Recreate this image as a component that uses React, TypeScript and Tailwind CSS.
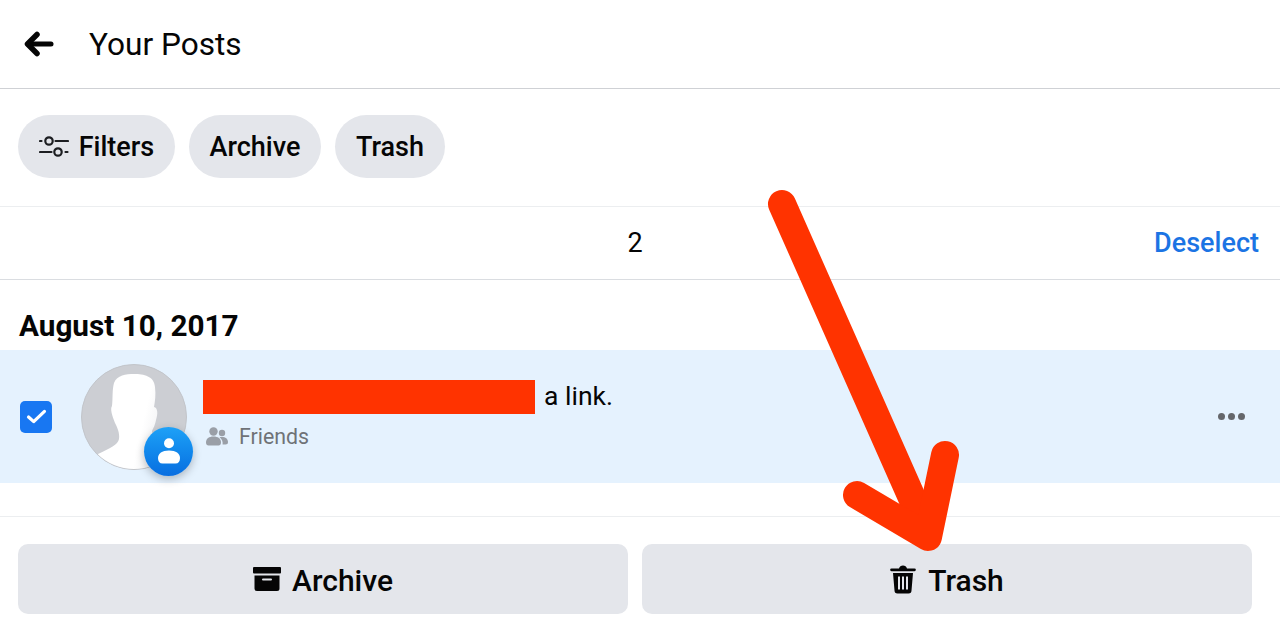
const roboto = "font-['Roboto',sans-serif]";

function BackArrow() {
  return (
    <svg className="w-[30px] h-[26px]" viewBox="0 0 30 26" fill="none" stroke="#050505" strokeLinecap="round" strokeLinejoin="round">
      <path d="M4 13H27" strokeWidth="5" />
      <path d="M13 3.5L3.5 13L13 22.5" strokeWidth="5.5" />
    </svg>
  );
}

function FilterIcon() {
  return (
    <svg className="w-[30px] h-[24px]" viewBox="0 0 30 24" fill="none" stroke="#1c1e21" strokeWidth="2.2" strokeLinecap="round">
      <circle cx="10" cy="6" r="3.7" />
      <path d="M1 6H2.5M16.5 6H29" />
      <circle cx="19" cy="17" r="3.7" />
      <path d="M1 17H12.5M26.5 17H28.5" />
    </svg>
  );
}

function ArchiveIcon() {
  return (
    <svg className="w-[28px] h-[24px]" viewBox="0 0 28 24" fill="#050505">
      <rect x="0" y="0" width="28" height="6.5" rx="1" />
      <path fillRule="evenodd" d="M1.5 8.5H26.5V21.5A2.5 2.5 0 0 1 24 24H4A2.5 2.5 0 0 1 1.5 21.5ZM10 11.5A1 1 0 0 0 10 13.5H18A1 1 0 0 0 18 11.5Z" />
    </svg>
  );
}

function TrashIcon() {
  return (
    <svg className="w-[26px] h-[29px]" viewBox="0 0 26 29" fill="#050505">
      <path d="M9 3.5C9.5 1.5 11 .5 13 .5S16.5 1.5 17 3.5H24.5A1.2 1.2 0 0 1 24.5 6.2H1.5A1.2 1.2 0 0 1 1.5 3.5Z" />
      <path fillRule="evenodd" d="M3 8H23L21.5 25.5A3 3 0 0 1 18.5 28.5H7.5A3 3 0 0 1 4.5 25.5ZM8 11.5V24.5H10V11.5ZM12 11.5V24.5H14V11.5ZM16 11.5V24.5H18V11.5Z" />
    </svg>
  );
}

function FriendsIcon() {
  return (
    <svg className="w-[22px] h-[19px]" viewBox="0 0 22 19" fill="#9a9fa7">
      <circle cx="7.5" cy="4.5" r="4.2" />
      <path d="M0 15.5C0 11.5 3 9.5 7.5 9.5S15 11.5 15 15.5C15 17.5 14 18.5 12.5 18.5H2.5C1 18.5 0 17.5 0 15.5Z" />
      <circle cx="16" cy="6" r="3.2" />
      <path d="M13.5 10.2C14.5 10 15.2 9.9 16 9.9C19.5 9.9 22 11.8 22 15C22 16.8 21 17.5 19.5 17.5H16.6C17 14.8 16 12 13.5 10.2Z" />
    </svg>
  );
}

function Avatar() {
  return (
    <div className="relative w-[106px] h-[106px] shrink-0">
      <div className="w-full h-full rounded-full overflow-hidden bg-[#ccced3] border border-[#c2c5ca]">
        <svg className="w-full h-full" viewBox="0 0 104 104">
          <defs>
            <linearGradient id="body" x1="0" y1="0" x2="1" y2="0.25">
              <stop offset="0.6" stopColor="#ffffff" />
              <stop offset="1" stopColor="#e6e7ea" />
            </linearGradient>
          </defs>
          <path
            d="M32 18C35 10 44 9 52 9C62 9 72 11 73 22C74 30 73 36 72 42C76 43 76 49 74 55C73 60 72 62 70 66C70 72 74 77 84 80L104 90V104H16L16 89C28 83 36 80 37 74C38 68 35 62 33 58C30 50 28 44 30 41C31 33 30 25 32 18Z"
            fill="url(#body)"
          />
        </svg>
      </div>
      {/* Profile badge */}
      <div className="absolute left-[63px] top-[63px] w-[49px] h-[49px] rounded-full bg-gradient-to-b from-[#1ea1f7] to-[#0a6ee0] shadow-[0_3px_8px_rgba(0,0,0,0.25)] flex items-center justify-center">
        <svg className="w-[22px] h-[26px]" viewBox="0 0 22 26" fill="#ffffff">
          <circle cx="11" cy="5.2" r="5" />
          <path d="M0 20C0 15.5 4 12.5 11 12.5S22 15.5 22 20C22 23.5 20.5 25.5 17.5 25.5H4.5C1.5 25.5 0 23.5 0 20Z" />
        </svg>
      </div>
    </div>
  );
}

export default function App() {
  return (
    <div className={`relative w-[1280px] h-[642px] overflow-hidden bg-white text-[#050505] ${roboto}`}>
      {/* Header */}
      <div className="h-[89px] flex items-center pl-[24px] border-b border-[#cfd1d5]">
        <BackArrow />
        <h1 className="ml-[35px] mt-[2px] text-[31.6px] font-normal leading-none">Your Posts</h1>
      </div>

      {/* Filter chips */}
      <div className="h-[118px] flex items-center gap-[14px] pl-[18px] pb-[2px] border-b border-[#eceef0]">
        <div className="h-[63px] w-[157px] rounded-full bg-[#e4e6eb] flex items-center justify-center gap-[10px] text-[27px] font-medium">
          <FilterIcon />
          <span className="mt-[1px]">Filters</span>
        </div>
        <div className="h-[63px] w-[132px] rounded-full bg-[#e4e6eb] flex items-center justify-center text-[27px] font-medium">
          <span className="mt-[1px]">Archive</span>
        </div>
        <div className="h-[63px] w-[110px] rounded-full bg-[#e4e6eb] flex items-center justify-center text-[27px] font-medium">
          <span className="mt-[1px]">Trash</span>
        </div>
      </div>

      {/* Selection bar */}
      <div className="relative h-[73px] flex items-center justify-center border-b border-[#dadde1] text-[27px]">
        <span className="-ml-[10px]">2</span>
        <span className="absolute right-[21px] font-medium text-[#1b74e4]">Deselect</span>
      </div>

      <div className="h-[70px] flex items-center pl-[19px] pt-[22px]">
        <h2 className="text-[29.7px] font-bold leading-none">August 10, 2017</h2>
      </div>

      {/* Selected post */}
      <div className="h-[133px] bg-[#e5f2fe] flex items-center pl-[20px] pr-[35px]">
        <div className="w-[32px] h-[32px] rounded-[5px] bg-[#1877f2] flex items-center justify-center shrink-0">
          <svg className="w-[21px] h-[15px]" viewBox="0 0 22 16" fill="none" stroke="#ffffff" strokeWidth="3.4" strokeLinecap="round" strokeLinejoin="round">
            <path d="M2.5 8.5L8 13.5L19.5 2.5" />
          </svg>
        </div>
        <div className="ml-[29px]">
          <Avatar />
        </div>
        <div className="ml-[16px] flex-1 -mt-[5px]">
          <div className="flex items-center h-[34px]">
            <div className="w-[332px] h-[34px] bg-[#ff3300]" />
            <span className="ml-[9px] -mt-[2px] text-[26.5px]">a link.</span>
          </div>
          <div className="flex items-center mt-[12px] ml-[3px]">
            <FriendsIcon />
            <span className="ml-[11px] text-[21.3px] text-[#6f7277] leading-none">Friends</span>
          </div>
        </div>
        <div className="flex gap-[3px]">
          <span className="w-[7px] h-[7px] rounded-full bg-[#65676b]" />
          <span className="w-[7px] h-[7px] rounded-full bg-[#65676b]" />
          <span className="w-[7px] h-[7px] rounded-full bg-[#65676b]" />
        </div>
      </div>

      {/* Bottom actions */}
      <div className="mt-[33px] border-t border-[#eceef0] pt-[27px] px-[18px] pr-[28px] flex gap-[14px]">
        <div className="w-[610px] h-[70px] rounded-[10px] bg-[#e4e6eb] flex items-center justify-center gap-[11px] text-[30px] font-medium">
          <ArchiveIcon />
          <span className="mt-[2px]">Archive</span>
        </div>
        <div className="w-[610px] h-[70px] rounded-[10px] bg-[#e4e6eb] flex items-center justify-center gap-[12px] text-[30px] font-medium">
          <TrashIcon />
          <span className="mt-[2px]">Trash</span>
        </div>
      </div>

      {/* Red annotation arrow */}
      <svg className="absolute left-0 top-0 w-[1280px] h-[642px] pointer-events-none" viewBox="0 0 1280 642" fill="none" stroke="#ff3300" strokeWidth="28" strokeLinecap="round" strokeLinejoin="round">
        <path d="M782 204L928 534" />
        <path d="M857 495L928 537L945 455" />
      </svg>
    </div>
  );
}
